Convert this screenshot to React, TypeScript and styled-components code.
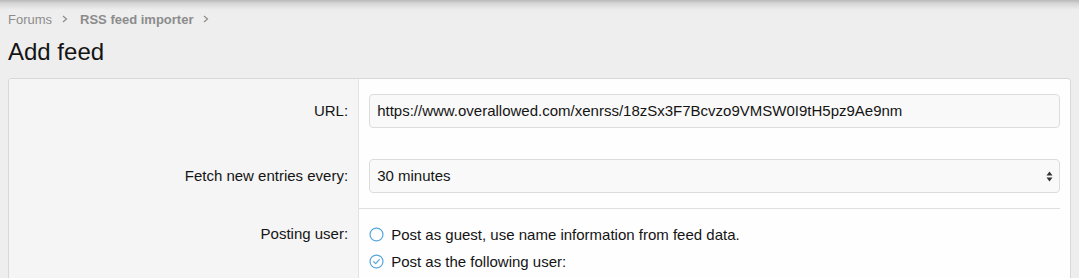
import React from "react";
import styled, { createGlobalStyle } from "styled-components";

const Global = createGlobalStyle`
  html, body { margin: 0; padding: 0; }
  body {
    background: #eeeeee;
    font-family: "Liberation Sans", Arial, sans-serif;
    color: #141414;
    width: 1079px;
    height: 278px;
    overflow: hidden;
  }
`;

const TopShade = styled.div`
  height: 10px;
  margin-bottom: -10px;
  background: linear-gradient(to bottom, #b9b9b9 0%, #d6d6d6 35%, #eeeeee 100%);
`;

const Page = styled.div`
  padding: 10px 8px 0;
`;

const Crumbs = styled.nav`
  display: flex;
  align-items: center;
  height: 18px;
  font-size: 13px;
  color: #8c8c8c;
  margin-bottom: 9px;
`;

const Crumb = styled.span<{ $bold?: boolean }>`
  font-weight: ${(p) => (p.$bold ? 700 : 400)};
`;

const Chevron = styled.svg`
  width: 6px;
  height: 8px;
  margin: 0 12px 0 10px;
`;

const Title = styled.h1`
  margin: 0 0 12px;
  font-size: 24px;
  line-height: 29px;
  font-weight: 400;
  color: #141414;
`;

const Block = styled.div`
  border: 1px solid #d8d8d8;
  border-radius: 3px;
  background: #fefefe;
  overflow: hidden;
`;

const Row = styled.div`
  display: grid;
  grid-template-columns: 33% 1fr;
`;

const Label = styled.div<{ $top: number }>`
  background: #f5f5f5;
  border-right: 1px solid #e2e2e2;
  text-align: right;
  font-size: 15px;
  line-height: 20px;
  padding: ${(p) => p.$top}px 10px 15px;
`;

const Field = styled.div<{ $separated?: boolean; $bottom?: number }>`
  padding: ${(p) => (p.$separated ? "16px" : "15px")} 10px ${(p) => p.$bottom ?? 15}px;
  background: ${(p) =>
    p.$separated
      ? "linear-gradient(#dfdfdf, #dfdfdf) top left / calc(100% - 10px) 1px no-repeat"
      : "none"};
`;

const TextInput = styled.div`
  height: 34px;
  box-sizing: border-box;
  border: 1px solid #dcdcdc;
  border-radius: 4px;
  background: #f9f9f9;
  padding: 6px 7px;
  font-size: 15px;
  line-height: 20px;
  display: flex;
  align-items: center;
  justify-content: space-between;
`;

const Arrows = styled.svg`
  width: 7px;
  height: 11px;
  margin-right: -1px;
`;

const Choices = styled.ul`
  list-style: none;
  margin: 0;
  padding: 0;
  display: flex;
  flex-direction: column;
  gap: 6px;
`;

const Choice = styled.li`
  display: flex;
  align-items: center;
  gap: 7px;
  font-size: 15px;
  line-height: 21px;
`;

const RadioIcon = styled.svg`
  width: 15px;
  height: 15px;
  flex: none;
`;

const Radio = ({ checked }: { checked?: boolean }) => (
  <RadioIcon viewBox="0 0 16 16">
    <circle cx="8" cy="8" r="6.9" fill="none" stroke="#58a6dc" strokeWidth="1.3" />
    {checked && (
      <path d="M5 8.3 L7.1 10.3 L11 5.9" fill="none" stroke="#58a6dc" strokeWidth="1.3" strokeLinecap="round" strokeLinejoin="round" />
    )}
  </RadioIcon>
);

const Sep = () => (
  <Chevron viewBox="0 0 6 8">
    <path d="M1 1 L4.5 4 L1 7" fill="none" stroke="#8c8c8c" strokeWidth="1.2" />
  </Chevron>
);

export default function App() {
  return (
    <>
      <Global />
      <TopShade />
      <Page>
        <Crumbs>
          <Crumb>Forums</Crumb>
          <Sep />
          <Crumb $bold>RSS feed importer</Crumb>
          <Sep />
        </Crumbs>
        <Title>Add feed</Title>
        <Block>
          <Row>
            <Label $top={22}>URL:</Label>
            <Field $bottom={16}>
              <TextInput>https://www.overallowed.com/xenrss/18zSx3F7Bcvzo9VMSW0I9tH5pz9Ae9nm</TextInput>
            </Field>
          </Row>
          <Row>
            <Label $top={22}>Fetch new entries every:</Label>
            <Field>
              <TextInput>
                <span>30 minutes</span>
                <Arrows viewBox="0 0 7 11">
                  <path d="M3.5 0.5 L6.5 4.5 L0.5 4.5 Z" fill="#333" />
                  <path d="M3.5 10.5 L6.5 6.5 L0.5 6.5 Z" fill="#333" />
                </Arrows>
              </TextInput>
            </Field>
          </Row>
          <Row>
            <Label $top={16}>Posting user:</Label>
            <Field $separated>
              <Choices>
                <Choice>
                  <Radio />
                  Post as guest, use name information from feed data.
                </Choice>
                <Choice>
                  <Radio checked />
                  Post as the following user:
                </Choice>
              </Choices>
            </Field>
          </Row>
        </Block>
      </Page>
    </>
  );
}
